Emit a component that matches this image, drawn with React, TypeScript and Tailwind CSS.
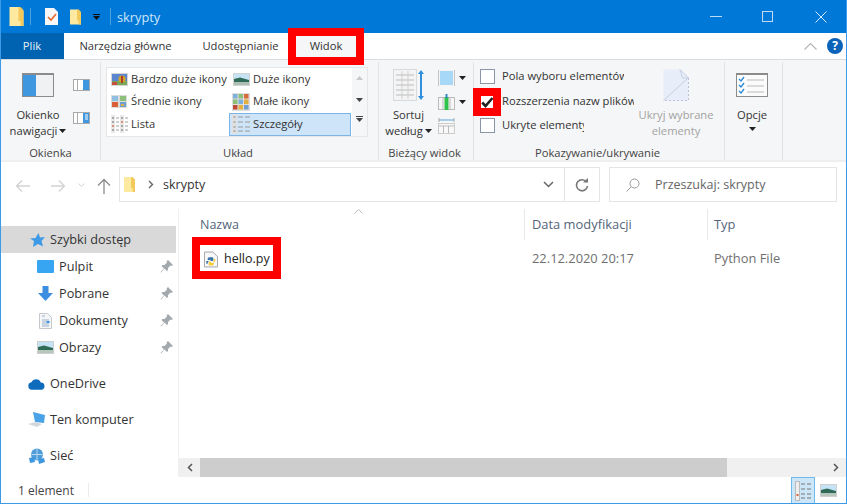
import React from "react";

const Caret = ({ c = "#222" }: { c?: string }) => (
  <svg width="7" height="4" viewBox="0 0 7 4" className="shrink-0"><path d="M0 0h7L3.500 4z" fill={c} /></svg>
);

const FolderTall = ({ w = 14, h = 19 }: { w?: number; h?: number }) => (
  <svg width={w} height={h} viewBox="0 0 14 19" className="shrink-0">
    <path d="M0 0h10v4h4v15H0z" fill="#fde9a0" />
    <path d="M9 0h2l3 3v16h-3V14H9z" fill="#f4c95c" />
  </svg>
);

const Glyph = ({ kind }: { kind: string }) => {
  if (kind === "xl")
    return (
      <svg width="17" height="13" viewBox="0 0 17 13">
        <rect width="17" height="13" fill="#d4d4d4" />
        <rect x="1" y="1" width="15" height="11" fill="#5b86cf" />
        <rect x="1" y="8" width="15" height="4" fill="#7aa858" />
        <rect x="1" y="9" width="5" height="3" fill="#c8503a" />
        <circle cx="11" cy="6" r="3.500" fill="#d8a428" />
        <rect x="10" y="3" width="2" height="7" fill="#a93c24" />
      </svg>
    );
  if (kind === "l")
    return (
      <svg width="17" height="13" viewBox="0 0 17 13">
        <rect width="17" height="13" fill="#d2d2d2" />
        <rect x="1" y="1" width="15" height="11" fill="#c6e2f5" />
        <path d="M1 6l6-1.500 9 2.500v5H1z" fill="#2f6b57" />
        <rect x="1" y="9" width="15" height="3" fill="#aebfb4" />
      </svg>
    );
  if (kind === "m")
    return (
      <svg width="16" height="13" viewBox="0 0 16 13">
        <rect width="16" height="13" fill="#dcdcdc" />
        <rect x="1" y="1" width="6" height="5" fill="#8fc0e2" />
        <rect x="9" y="1" width="6" height="5" fill="#8cc07a" />
        <rect x="1" y="7" width="6" height="5" fill="#d9603a" />
        <rect x="9" y="7" width="6" height="5" fill="#6f9fd0" />
        <rect x="10" y="9" width="3" height="2" fill="#e0b040" />
      </svg>
    );
  if (kind === "s") {
    const cols = ["#7fb0dc", "#8cc07a", "#d96a3a", "#8cc07a", "#7fb0dc", "#e0b040", "#c04a3a", "#e0b040", "#6f9fd0"];
    const out: React.ReactNode[] = [];
    for (let y = 0; y < 3; y++)
      for (let x = 0; x < 3; x++)
        out.push(<rect key={`${x}-${y}`} x={1 + x * 5.500} y={1 + y * 5.500} width="4.500" height="4.500" fill={cols[x + y * 3]} />);
    return (
      <svg width="18" height="18" viewBox="0 0 18 18">
        <rect width="18" height="18" fill="#dedede" />
        {out}
      </svg>
    );
  }
  if (kind === "list")
    return (
      <svg width="17" height="18" viewBox="0 0 17 18" fill="none">
        <rect x="0" y="0" width="4" height="18" fill="#e8e8e8" />
        <rect x="9" y="0" width="4" height="18" fill="#e8e8e8" />
        {[2, 6, 10, 14].map((y) => (
          <g key={y}>
            <rect x="1" y={y} width="2" height="2" fill={y === 10 ? "#d9907a" : "#a8a8a8"} />
            <rect x="10" y={y} width="2" height="2" fill={y === 6 ? "#d9907a" : "#a8a8a8"} />
            <path d={`M5 ${y + 1}h3M14 ${y + 1}h3`} stroke="#a0a0a0" />
          </g>
        ))}
      </svg>
    );
  return (
    <svg width="18" height="20" viewBox="0 0 18 20" fill="none">
      <rect x="0" y="0" width="5" height="20" fill="#e0e0e0" />
      {[3, 8, 13, 17].map((y) => (
        <g key={y}>
          <rect x="1.500" y={y - 1} width="2" height="2" fill="#b0b0b0" />
          <path d={`M6 ${y}h5M13 ${y}h5`} stroke="#9a9a9a" />
        </g>
      ))}
    </svg>
  );
};

const Gallery = ({ kind, label, on }: { kind: string; label: string; on?: boolean }) => (
  <div className={`flex h-[22.500px] items-center gap-[3px] ${on ? "border border-[#7fb4e6] bg-[#cde4f9] pl-[2px]" : "pl-[3px]"}`}>
    <span className="flex w-[18px] justify-center"><Glyph kind={kind} /></span>
    <span className="whitespace-nowrap">{label}</span>
  </div>
);

const Check = ({ label, w }: { label: string; w: string }) => (
  <div className="flex h-[24.500px] items-center gap-[7px] pl-[6px]">
    <span className="h-[15px] w-[15px] shrink-0 border border-[#8a96a8] bg-white" />
    <span className={`overflow-hidden whitespace-nowrap ${w}`}>{label}</span>
  </div>
);

const Group = ({ w, label, children, tight }: { w: string; label: string; children: React.ReactNode; tight?: boolean }) => (
  <div className={`flex h-full shrink-0 flex-col border-r border-[#e2e3e5] ${w}`}>
    <div className="flex min-h-0 flex-1">{children}</div>
    <div className={`h-[16px] text-center leading-[18px] text-[#444] ${tight ? "" : "pr-[3px]"}`}>{label}</div>
  </div>
);

const Pin = () => (
  <svg width="13" height="13" viewBox="0 0 13 13" className="ml-auto mr-[3px] shrink-0">
    <path d="M8 0l5 5-1.500 1-1-.5-2.500 2.500 0 2-1 1-2.500-2.500L1 12.500l-.5-.5 3.500-3.500L1.500 6l1-1h2L7 2.500 6.500 1.500z" fill="#a3a9ad" />
  </svg>
);

const NavRow = ({ icon, label, pin, pad, top, on, center }: { icon: React.ReactNode; label: string; pin?: boolean; pad: string; top?: string; on?: boolean; center?: boolean }) => (
  <div className={`flex h-[27px] items-center text-[12.700px] ${pad} ${top ?? ""} ${on ? "bg-[#d9d9d9]" : ""}`}>
    <span className={`flex w-[22px] shrink-0 pr-[5px] ${center ? "justify-center" : "justify-end"}`}>{icon}</span>
    <span className="whitespace-nowrap">{label}</span>
    {pin && <Pin />}
  </div>
);

export default function App() {
  return (
    <div
      className="relative flex h-[504px] w-[847px] flex-col overflow-hidden border-x border-b border-[#3c9ae6] bg-white text-[11.200px] text-[#333]"
      style={{ fontFamily: '"Open Sans","Noto Sans",sans-serif' }}
    >
      {/* Title bar */}
      <div className="-mx-px flex h-[33px] shrink-0 items-center bg-[#0078d7] pl-[9px] text-[#cfe6f8]">
        <FolderTall w={15} h={19} />
        <span className="ml-[6px] h-[17px] w-px bg-[#4a9fe0]" />
        <svg width="13" height="17" viewBox="0 0 13 17" className="ml-[14px]">
          <path d="M0 0h9l4 4v13H0z" fill="#f7f7f7" />
          <path d="M3 9l3 3 5-6" stroke="#e8672c" strokeWidth="1.600" fill="none" />
        </svg>
        <span className="ml-[12px]"><FolderTall w={11} h={16} /></span>
        <span className="ml-[12px] flex flex-col items-center gap-[1px]">
          <span className="h-px w-[7px] bg-[#111]" />
          <Caret c="#111" />
        </span>
        <span className="ml-[10px] h-[17px] w-px bg-[#4a9fe0]" />
        <span className="ml-[6px] pt-[3px] text-[12.800px]">skrypty</span>
        <div className="ml-auto flex items-center">
          <span className="mr-[40px] h-px w-[12px] bg-[#bcdcf5]" />
          <span className="mr-[42px] h-[11px] w-[11px] border border-[#bcdcf5]" />
          <svg width="12" height="12" viewBox="0 0 12 12" className="mr-[20px]"><path d="M.5.5l11 11M11.500.5l-11 11" stroke="#d5e9f9" /></svg>
        </div>
      </div>

      {/* Tabs */}
      <div className="-mx-px flex h-[27px] shrink-0 items-center border-b border-[#dadbdc] bg-white">
        <div className="flex h-full w-[64px] items-center justify-center bg-[#0063b1] text-[#e6f0f8]">Plik</div>
        <div className="w-[123px] text-center">Narzędzia główne</div>
        <div className="w-[107px] text-center">Udostępnianie</div>
        <div className="flex h-full w-[64px] items-center justify-center bg-[#f5f6f7]">Widok</div>
        <div className="ml-auto mr-[4px] flex items-center gap-[10px]">
          <svg width="13" height="8" viewBox="0 0 13 8"><path d="M.5 7.500l6-6 6 6" stroke="#b5b5b5" fill="none" strokeWidth="1.200" /></svg>
          <span className="flex h-[16px] w-[16px] items-center justify-center rounded-full bg-[#0a63b8] text-[12px] font-bold text-white">?</span>
        </div>
      </div>

      {/* Ribbon */}
      <div className="flex h-[102px] shrink-0 border-b-2 border-[#eeeff0] bg-[#f5f6f7] pt-[2px]">
        <Group w="w-[100px]" label="Okienka" tight>
          <div className="flex w-[69px] flex-col items-center pt-[11px] pl-[5px] text-center leading-[16px]">
            <svg width="32" height="24" viewBox="0 0 32 24" className="mb-[10px] shrink-0">
              <rect width="32" height="24" fill="#8b8b8b" />
              <rect x="1" y="2" width="30" height="21" fill="#f0f1f2" />
              <rect x="1" y="2" width="13" height="21" fill="#3f97e0" />
            </svg>
            <div>Okienko</div>
            <div className="flex items-center gap-[2px] whitespace-nowrap">nawigacji <Caret /></div>
          </div>
          <div className="flex flex-col gap-[21px] pt-[17px] pl-[3px]">
            <svg width="17" height="12" viewBox="0 0 17 12"><rect width="17" height="12" fill="#a9a9a9" /><rect x="1" y="1" width="15" height="10" fill="#fff" /><rect x="10" y="1" width="6" height="10" fill="#3f97e0" /><rect x="4" y="1" width="1" height="10" fill="#aaa" /></svg>
            <svg width="17" height="12" viewBox="0 0 17 12"><rect width="17" height="12" fill="#a9a9a9" /><rect x="1" y="1" width="15" height="10" fill="#fff" /><rect x="10" y="1" width="6" height="10" fill="#3f97e0" /><rect x="4" y="1" width="1" height="10" fill="#aaa" /><path d="M12 3h3M12 5h3M12 7h3" stroke="#fff" /></svg>
          </div>
        </Group>

        <Group w="w-[278px]" label="Układ">
          <div className="ml-[5px] mt-[5px] flex h-[69.500px] w-[262px] shrink-0 border border-[#e5e6e8] bg-white">
            <div className="w-[122px] shrink-0">
              <Gallery kind="xl" label="Bardzo duże ikony" />
              <Gallery kind="m" label="Średnie ikony" />
              <Gallery kind="list" label="Lista" />
            </div>
            <div className="w-[122px] shrink-0">
              <Gallery kind="l" label="Duże ikony" />
              <Gallery kind="s" label="Małe ikony" />
              <Gallery kind="d" label="Szczegóły" on />
            </div>
            <div className="ml-[1px] flex flex-1 flex-col items-center bg-[#f5f6f7] pt-[8px]">
              <svg width="7" height="4" viewBox="0 0 7 4"><path d="M0 4h7L3.500 0z" fill="#c8c8c8" /></svg>
              <span className="mt-[18px] flex"><Caret c="#444" /></span>
              <span className="mt-[14px] flex flex-col items-center gap-[1px]"><span className="h-px w-[7px] bg-[#444]" /><Caret c="#444" /></span>
            </div>
          </div>
        </Group>

        <Group w="w-[95px]" label="Bieżący widok">
          <div className="flex w-[59px] flex-col items-center pt-[7px] text-center leading-[16px]">
            <svg width="32" height="32" viewBox="0 0 32 32" className="mb-[6px] ml-[14px] shrink-0 self-start">
              <rect width="24" height="32" fill="#d8d9da" />
              <rect x="1" y="1" width="22" height="30" fill="#f4f4f4" />
              {[6, 11, 16, 21, 26].map((y) => (<path key={y} d={`M3 ${y}h18`} stroke="#b9bcbf" />))}
              <path d="M9 2v28M15 2v28" stroke="#d0d0d0" />
              <path d="M28 3v26" stroke="#2f8fdc" strokeWidth="2" />
              <path d="M25 5l3-4 3 4zM25 27l3 4 3-4z" fill="#2f8fdc" />
            </svg>
            <div>Sortuj</div>
            <div className="flex items-center gap-[2px] whitespace-nowrap">według <Caret /></div>
          </div>
          <div className="flex flex-col pt-[4px]">
            <div className="flex h-[24px] items-center gap-[4px]"><svg width="17" height="16" viewBox="0 0 17 16"><rect width="17" height="16" fill="#c4c4c4" /><rect x="1" y="0" width="15" height="16" fill="#f4f4f4" /><rect x="2" y="1" width="13" height="14" fill="#a8d8f8" /></svg><Caret /></div>
            <div className="flex h-[24px] items-center gap-[4px]"><svg width="17" height="16" viewBox="0 0 17 16"><rect y="3" width="17" height="13" fill="#bbb" /><rect x="1" y="4" width="15" height="11" fill="#f6f6f6" /><path d="M5 4v11M12 4v11" stroke="#bbb" /><rect x="6.500" y="3" width="4" height="13" fill="#2fc24a" /><rect x="7.500" y="0" width="2" height="4" fill="#3388cc" /></svg><Caret /></div>
            <div className="flex h-[24px] items-center"><svg width="17" height="16" viewBox="0 0 17 16"><rect y="5" width="17" height="11" fill="#ccc" /><rect x="1" y="6" width="15" height="9" fill="#f8f8f8" /><path d="M5.500 8v7M10.500 8v7M1 8h15" stroke="#bbb" /><path d="M1 2h15" stroke="#5aa5dd" /><path d="M1 0v4M16 0v4" stroke="#aaa" /></svg></div>
          </div>
        </Group>

        <Group w="w-[251px]" label="Pokazywanie/ukrywanie">
          <div className="flex w-[163px] shrink-0 flex-col pt-[2.500px]">
            <Check label="Pola wyboru elementów" w="w-[122px]" />
            <Check label="Rozszerzenia nazw plików" w="w-[132px]" />
            <Check label="Ukryte elementy" w="w-[82px]" />
          </div>
          <div className="ml-[1px] flex w-[76px] flex-col items-center pt-[7px] text-center leading-[16px] text-[#a3a3a3]">
            <svg width="26" height="32" viewBox="0 0 26 32" className="mb-[6px] shrink-0">
              <path d="M.5.5h17l8 8v23H.5z" fill="#e7eef9" />
              <path d="M17 .5l8.500 8.500-6 0zM.5 31.500L25 9" stroke="#c7cfe0" fill="none" />
              <path d="M25.500 9v22.500H1" stroke="#b8c2d4" strokeDasharray="2 2" fill="none" />
            </svg>
            <div className="whitespace-nowrap">Ukryj wybrane</div>
            <div>elementy</div>
          </div>
        </Group>

        <Group w="w-[58px]" label="">
          <div className="flex w-full flex-col items-center pt-[11px] pr-[3px] text-center leading-[16px]">
            <svg width="32" height="24" viewBox="0 0 32 24" className="mb-[10px] shrink-0">
              <rect width="32" height="24" fill="#8b8b8b" />
              <rect x="1" y="2" width="30" height="21" fill="#fbfbfb" />
              {[6, 12, 18].map((y) => (<g key={y}><path d={`M3 ${y}l2 2 3-4`} stroke="#2a8ad8" strokeWidth="1.300" fill="none" /><path d={`M11 ${y + 1}h17`} stroke="#bbb" /></g>))}
            </svg>
            <div>Opcje</div>
            <div className="mt-[4px] flex justify-center"><Caret /></div>
          </div>
        </Group>
      </div>

      {/* Address bar */}
      <div className="flex h-[47px] shrink-0 items-start pt-[5px] text-[12.500px]">
        <div className="flex h-[35px] w-[118px] shrink-0 items-center pt-[2px]">
          <svg width="16" height="14" viewBox="0 0 16 14" className="ml-[14px]"><path d="M15 7H1.500M7 1.500L1.500 7 7 12.500" stroke="#d2d2d2" strokeWidth="1.300" fill="none" /></svg>
          <svg width="16" height="14" viewBox="0 0 16 14" className="ml-[19px]"><path d="M1 7h13.500M9 1.500L14.500 7 9 12.500" stroke="#d2d2d2" strokeWidth="1.300" fill="none" /></svg>
          <svg width="7" height="5" viewBox="0 0 7 5" className="ml-[12px]"><path d="M.5.5l3 3 3-3" stroke="#d2d2d2" fill="none" /></svg>
          <svg width="14" height="16" viewBox="0 0 14 16" className="ml-[12px]"><path d="M7 16V1.500M1 7.500l6-6 6 6" stroke="#8c8c8c" strokeWidth="1.300" fill="none" /></svg>
        </div>
        <div className="flex h-[35px] w-[481px] shrink-0 items-center border border-[#e5e5e5]">
          <span className="ml-[4px] flex"><FolderTall w={11} h={15} /></span>
          <svg width="6" height="9" viewBox="0 0 6 9" className="ml-[13px]"><path d="M1 1l3.500 3.500L1 8" stroke="#666" strokeWidth="1.400" fill="none" /></svg>
          <span className="ml-[9px] pt-[2px]">skrypty</span>
          <svg width="11" height="7" viewBox="0 0 11 7" className="ml-auto mr-[10px]"><path d="M1 1l4.500 4.500L10 1" stroke="#666" strokeWidth="1.500" fill="none" /></svg>
          <div className="flex h-full w-[35px] items-center justify-center border-l border-[#e5e5e5]">
            <svg width="14" height="14" viewBox="0 0 14 14"><path d="M11.500 4A5.500 5.500 0 1 0 12.500 8" stroke="#777" strokeWidth="1.600" fill="none" /><path d="M8 4.500h5V0z" fill="#777" /></svg>
          </div>
        </div>
        <div className="ml-[9px] flex h-[35px] w-[228px] shrink-0 items-center border border-[#e5e5e5] pl-[16px] text-[#666]">
          <svg width="14" height="14" viewBox="0 0 14 14"><circle cx="8.500" cy="5.500" r="4.500" stroke="#999" fill="none" /><path d="M5.200 8.800L.5 13.500" stroke="#999" /></svg>
          <span className="ml-[15px] pt-[1px]">Przeszukaj: skrypty</span>
        </div>
      </div>

      {/* Main */}
      <div className="flex min-h-0 flex-1">
        <div className="w-[178px] shrink-0 border-r border-[#f0f0f0] pt-[17px] pr-[2px] text-[#333]">
          <NavRow on pad="pl-[27px]" label="Szybki dostęp" icon={<svg width="15" height="14" viewBox="0 0 15 14"><path d="M8.500 0l1.500 4.500 5-.5-3.500 4 1.500 5.500-5-2.500L3 14l1-6L0 5.500l5.500-.5z" fill="#3f9ae6" /></svg>} />
          <NavRow pin center pad="pl-[36px]" label="Pulpit" icon={<svg width="17" height="13" viewBox="0 0 17 13"><rect width="17" height="13" rx="1" fill="#37a5f2" /></svg>} />
          <NavRow pin center pad="pl-[36px]" label="Pobrane" icon={<svg width="15" height="15" viewBox="0 0 15 15"><path d="M4.500 0h6v7h4.500l-7.500 8-7.500-8h4.500z" fill="#3d8ee0" /></svg>} />
          <NavRow pin center pad="pl-[36px]" label="Dokumenty" icon={<svg width="13" height="16" viewBox="0 0 13 16"><path d="M.5.5h8l4 4v11H.5z" fill="#f4f6f8" stroke="#c4c8cc" /><path d="M3 3h3M3 7h7M3 9h4M3 11h7M3 13h7" stroke="#9ab0c8" /><rect x="7.500" y="8" width="3" height="2" fill="#3d8ee0" /></svg>} />
          <NavRow pin center pad="pl-[36px]" label="Obrazy" icon={<svg width="17" height="13" viewBox="0 0 17 13"><rect width="17" height="13" fill="#cfcfcf" /><rect x="1" y="1" width="15" height="11" fill="#c6e2f5" /><path d="M1 6l6-1.500 9 2.500v5H1z" fill="#2f6b57" /><rect x="1" y="9" width="15" height="3" fill="#b7c7bc" /></svg>} />
          <NavRow top="mt-[9px]" pad="pl-[27px]" label="OneDrive" icon={<svg width="18" height="12" viewBox="0 0 18 12"><path d="M4 12a4 4 0 0 1-.5-7.900A5.500 5.500 0 0 1 13.500 4.500 3.800 3.800 0 0 1 14.500 12z" fill="#0f6cbd" /></svg>} />
          <NavRow top="mt-[9px]" pad="pl-[27px]" label="Ten komputer" icon={<svg width="17" height="16" viewBox="0 0 17 16"><path d="M5 0l12 3-1 8-9-1z" fill="#4aa3e6" /><path d="M0 12l7-2 7 2-5 3z" fill="#d5d8da" /></svg>} />
          <NavRow top="mt-[9px]" pad="pl-[27px]" label="Sieć" icon={<svg width="16" height="16" viewBox="0 0 16 16"><circle cx="8" cy="6.500" r="6" fill="#4f9dd8" /><path d="M8 1v11M2.500 6.500h11" stroke="#b8d9f1" /><path d="M0 10l5-1 1 5-5 1zM9 11l6-1 1 4-6 2z" fill="#3f97e0" /></svg>} />
        </div>

        <div className="flex min-w-0 flex-1 flex-col text-[12.900px]">
          <div className="flex flex-1 flex-col text-[#6f6f6f]">
            <div className="relative flex h-[31px] shrink-0 items-center text-[#54647a]">
              <svg width="9" height="5" viewBox="0 0 9 5" className="absolute left-[175px] top-0"><path d="M.5 4.500l4-4 4 4" stroke="#bbb" fill="none" /></svg>
              <div className="flex h-full w-[346px] items-center border-r border-[#e8e8e8] pl-[21px] pt-[1px] text-[12.500px]">Nazwa</div>
              <div className="flex h-full w-[183px] items-center border-r border-[#e8e8e8] pl-[7px]">Data modyfikacji</div>
              <div className="pl-[6px]">Typ</div>
            </div>
            <div className="mt-[6px] flex h-[26px] items-center">
              <div className="flex w-[346px] items-center pl-[25px] text-[#222]">
                <svg width="14" height="17" viewBox="0 0 15 17" className="shrink-0">
                  <path d="M.5.5h9l5 5v11H.5z" fill="#f8f8f8" stroke="#9aa0a6" />
                  <path d="M7 6c-3 0-3 1-3 2v1h3v1H3c-1 0-1 3 0 3h1v-1c0-1 1-2 2-2h3c1 0 1-1 1-1V7c0-1-1-1-3-1z" fill="#3a75a8" />
                  <path d="M7.500 15c3 0 3-1 3-2v-1h-3v-1h4c1 0 1-3 0-3h-1v1c0 1-1 2-2 2H6s-1 0-1 1v2c0 1 1 1 2.500 1z" fill="#f7cd3f" />
                </svg>
                <span className="ml-[6px] text-[12.500px]">hello.py</span>
              </div>
              <div className="w-[183px] pl-[7px]">22.12.2020 20:17</div>
              <div className="pl-[6px]">Python File</div>
            </div>
          </div>
          <div className="flex h-[19px] shrink-0 items-center bg-[#f0f0f0]">
            <span className="flex w-[21px] justify-center"><svg width="6" height="9" viewBox="0 0 6 9"><path d="M5 1L1.500 4.500 5 8" stroke="#555" strokeWidth="1.500" fill="none" /></svg></span>
            <div className="h-full w-[527px] bg-[#cdcdcd]" />
            <span className="ml-auto flex w-[20px] justify-center"><svg width="6" height="9" viewBox="0 0 6 9"><path d="M1 1l3.500 3.500L1 8" stroke="#555" strokeWidth="1.500" fill="none" /></svg></span>
          </div>
        </div>
      </div>

      {/* Status bar */}
      <div className="flex h-[26px] shrink-0 items-center pl-[17px] text-[12px] text-[#444]">
        <span className="w-[70px] pt-[2px]">1 element</span>
        <span className="h-[14px] w-px bg-[#ececec]" />
        <div className="ml-auto flex h-full items-center">
          <div className="flex h-full w-[24px] items-center justify-center border-x border-t border-[#6fbcec] bg-[#cde6f7]">
            <svg width="16" height="20" viewBox="0 0 16 20" fill="none"><rect x=".5" y=".5" width="4" height="19" fill="#eee" stroke="#bbb" /><rect x="1.500" y="13" width="2" height="2" fill="#d9673a" /><path d="M6 3h4M12 3h4M6 8h4M12 8h4M6 13h4M12 13h4M6 17h4M12 17h4" stroke="#777" /></svg>
          </div>
          <div className="ml-[5px] mr-[9px] flex">
            <svg width="17" height="13" viewBox="0 0 17 13"><rect width="17" height="13" fill="#cfcfcf" /><rect x="1" y="1" width="15" height="11" fill="#c6e2f5" /><path d="M1 6l6-1.500 9 2.500v5H1z" fill="#2f6b57" /><rect x="1" y="9" width="15" height="3" fill="#b7c7bc" /></svg>
          </div>
        </div>
      </div>

      {/* Red annotation frames */}
      <div className="absolute left-[287px] top-[28px] h-[37px] w-[76px] border-[8px] border-[#ff0000]" />
      <div className="absolute left-[191px] top-[237px] h-[42px] w-[89px] border-[8px] border-[#ff0000]" />
      <div className="absolute left-[472px] top-[88px] flex h-[28px] w-[28px] items-center justify-center border-[8px] border-[#ff0000] bg-white">
        <svg width="13" height="11" viewBox="0 0 13 11" className="shrink-0"><path d="M1.200 5.500l3.300 3.500 7-8" stroke="#222" strokeWidth="2.600" fill="none" /></svg>
      </div>
    </div>
  );
}
